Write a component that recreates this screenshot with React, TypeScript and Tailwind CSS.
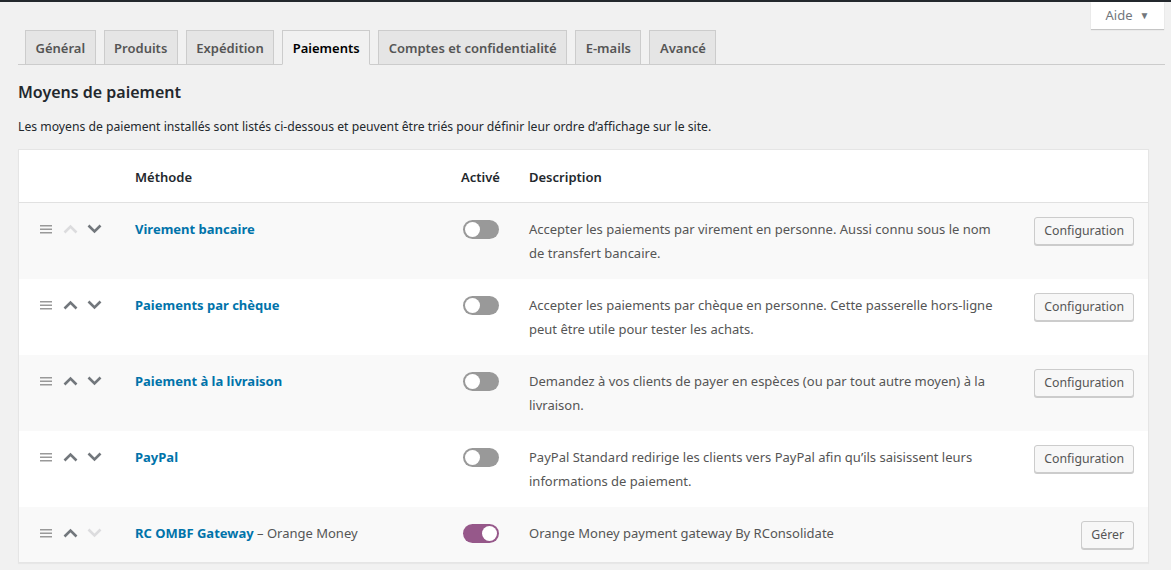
const TABS = ['Général', 'Produits', 'Expédition', 'Paiements', 'Comptes et confidentialité', 'E-mails', 'Avancé'];

const METHODS = [
  {
    name: 'Virement bancaire',
    desc: 'Accepter les paiements par virement en personne. Aussi connu sous le nom de transfert bancaire.',
    on: false,
    action: 'Configuration',
    up: false,
    down: true,
  },
  {
    name: 'Paiements par chèque',
    desc: 'Accepter les paiements par chèque en personne. Cette passerelle hors-ligne peut être utile pour tester les achats.',
    on: false,
    action: 'Configuration',
    up: true,
    down: true,
  },
  {
    name: 'Paiement à la livraison',
    desc: 'Demandez à vos clients de payer en espèces (ou par tout autre moyen) à la livraison.',
    on: false,
    action: 'Configuration',
    up: true,
    down: true,
  },
  {
    name: 'PayPal',
    desc: 'PayPal Standard redirige les clients vers PayPal afin qu’ils saisissent leurs informations de paiement.',
    on: false,
    action: 'Configuration',
    up: true,
    down: true,
  },
  {
    name: 'RC OMBF Gateway',
    suffix: ' – Orange Money',
    desc: 'Orange Money payment gateway By RConsolidate',
    on: true,
    action: 'Gérer',
    up: true,
    down: false,
  },
];

function Chevron({ dir, enabled }: { dir: 'up' | 'down'; enabled: boolean }) {
  return (
    <svg width="15" height="10" viewBox="0 0 15 10" className={enabled ? 'text-[#72777c]' : 'text-[#dcdcde]'}>
      {dir === 'up' ? (
        <polyline points="1.5,8.5 7.5,2.5 13.5,8.5" fill="none" stroke="currentColor" strokeWidth="2.6" />
      ) : (
        <polyline points="1.5,1.5 7.5,7.5 13.5,1.5" fill="none" stroke="currentColor" strokeWidth="2.6" />
      )}
    </svg>
  );
}

function Toggle({ on }: { on: boolean }) {
  return (
    <span
      className={`flex h-[19px] w-[36px] items-center rounded-full px-[2px] ${on ? 'justify-end bg-[#96588a]' : 'justify-start bg-[#999]'}`}
    >
      <span className="h-[15px] w-[15px] rounded-full bg-white" />
    </span>
  );
}

export default function App() {
  return (
    <div className="min-h-[570px] bg-[#f1f1f1] text-[13px] text-[#23282d] [font-family:'Noto_Sans',sans-serif]">
      <div className="h-[2px] bg-[#23282d]" />
      <div className="flex justify-end pr-[7px]">
        <button className="flex h-[27px] w-[73px] items-center justify-center gap-[7px] bg-white text-[13px] text-[#72777c] shadow-[0_1px_1px_rgba(0,0,0,0.18)]">
          Aide
          <span className="text-[10px] text-[#72777c]">▼</span>
        </button>
      </div>

      <div className="ml-[18px] mr-[6px] mt-px flex gap-[8px] border-b border-[#ccc] pl-[7px]">
        {TABS.map((t) => (
          <div
            key={t}
            className={`-mb-px flex h-[35px] items-center border border-[#ccc] px-[9.5px] pt-[2px] text-[13px] font-semibold ${
              t === 'Paiements' ? 'border-b-[#f1f1f1] bg-[#f1f1f1] text-black' : 'bg-[#e5e5e5] text-[#555]'
            }`}
          >
            {t}
          </div>
        ))}
      </div>

      <div className="px-[18px] pr-[22px]">
        <h2 className="mt-[15px] text-[16px] font-semibold leading-[24px] text-[#23282d]">Moyens de paiement</h2>
        <p className="mt-[11px] text-[12.2px] leading-[24px]">
          Les moyens de paiement installés sont listés ci-dessous et peuvent être triés pour définir leur ordre d’affichage sur le site.
        </p>

        <div className="mt-[10px] border border-[#e5e5e5] bg-white shadow-[0_1px_1px_rgba(0,0,0,0.04)]">
          <div className="flex h-[53px] items-center border-b border-[#e1e1e1] pt-[3px] font-semibold">
            <div className="w-[116px]" />
            <div className="w-[326px]">Méthode</div>
            <div className="w-[68px]">Activé</div>
            <div>Description</div>
          </div>

          {METHODS.map((m, i) => (
            <div
              key={m.name}
              className={`flex items-start pt-[14px] ${i % 2 === 0 ? 'bg-[#f9f9f9]' : 'bg-white'} ${
                i === METHODS.length - 1 ? 'h-[55px]' : 'h-[76px]'
              }`}
            >
              <div className="flex h-[24px] w-[116px] items-center pl-[21px]">
                <svg width="12" height="9" viewBox="0 0 12 9" className="text-[#999]">
                  <rect x="0" y="0" width="12" height="1.5" fill="currentColor" />
                  <rect x="0" y="3.5" width="12" height="1.5" fill="currentColor" />
                  <rect x="0" y="7" width="12" height="1.5" fill="currentColor" />
                </svg>
                <span className="ml-[11px]">
                  <Chevron dir="up" enabled={m.up} />
                </span>
                <span className="ml-[9px]">
                  <Chevron dir="down" enabled={m.down} />
                </span>
              </div>
              <div className="w-[326px] leading-[24px]">
                <a className="font-bold text-[#0073aa]">{m.name}</a>
                {m.suffix && <span className="text-[#555]">{m.suffix}</span>}
              </div>
              <div className="flex h-[24px] w-[68px] items-center pl-[2px]">
                <Toggle on={m.on} />
              </div>
              <div className="w-[480px] leading-[24px] text-[#555]">{m.desc}</div>
              <div className="flex flex-1 justify-end pr-[14px]">
                <button className="h-[28px] rounded-[3px] border border-[#ccc] bg-[#f7f7f7] px-[9px] text-[12.3px] text-[#555] shadow-[0_1px_0_#ccc]">
                  {m.action}
                </button>
              </div>
            </div>
          ))}
        </div>
      </div>
    </div>
  );
}
